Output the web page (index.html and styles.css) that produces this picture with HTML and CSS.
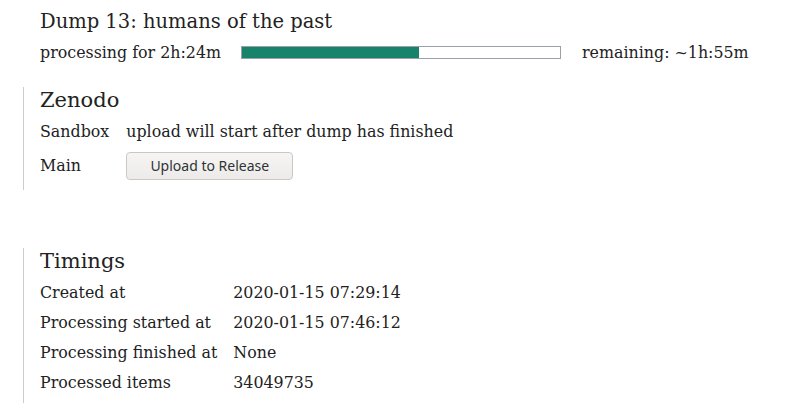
FILE: index.html
```html
<!DOCTYPE html>
<html>
<head>
<meta charset="utf-8">
<link rel="stylesheet" href="styles.css">
</head>
<body>
<div class="page">
  <div class="intro">
    <h1 class="title">Dump 13: humans of the past</h1>
    <div class="progress-row">
      <span>processing for 2h:24m</span>
      <div class="bar"><div class="bar-fill" style="width:55.6%"></div></div>
      <span>remaining: ~1h:55m</span>
    </div>
  </div>

  <section class="section zenodo">
    <h2 class="section-title">Zenodo</h2>
    <div class="table table-zenodo">
      <div class="cell">Sandbox</div>
      <div class="cell">upload will start after dump has finished</div>
      <div class="cell">Main</div>
      <div class="cell"><button class="btn" type="button">Upload to Release</button></div>
    </div>
  </section>

  <section class="section timings">
    <h2 class="section-title">Timings</h2>
    <div class="table">
      <div class="cell">Created at</div>
      <div class="cell">2020-01-15 07:29:14</div>
      <div class="cell">Processing started at</div>
      <div class="cell">2020-01-15 07:46:12</div>
      <div class="cell">Processing finished at</div>
      <div class="cell">None</div>
      <div class="cell">Processed items</div>
      <div class="cell">34049735</div>
    </div>
  </section>
</div>
</body>
</html>
```

FILE: styles.css
```css
html, body {
  margin: 0;
  padding: 0;
  background: #ffffff;
}

body {
  font-family: "DejaVu Serif", serif;
  font-size: 15.85px;
  color: #222222;
}

.page {
  padding: 10px 0 0 23px;
}

.intro {
  padding-left: 17px;
}

.title {
  margin: 0;
  font-size: 19.5px;
  font-weight: normal;
  line-height: 23px;
}

.progress-row {
  display: flex;
  align-items: center;
  height: 20px;
  margin-top: 9px;
}

.bar {
  width: 318px;
  height: 11px;
  border: 1px solid #9aa0a8;
  margin: 0 21px 0 20px;
  background: #ffffff;
  display: flex;
}

.bar-fill {
  height: 100%;
  background: #17836b;
}

.section {
  border-left: 1px solid #cccccc;
  padding: 2px 0 5px 16px;
}

.zenodo {
  margin-top: 25px;
}

.timings {
  margin-top: 58px;
}

.section-title {
  margin: 0;
  font-size: 21px;
  font-weight: normal;
  line-height: 23px;
}

.table {
  display: grid;
  grid-template-columns: max-content 1fr;
  column-gap: 16px;
  margin-top: 5px;
}

.table-zenodo {
  column-gap: 17px;
}

.cell {
  display: flex;
  align-items: center;
  padding: 5px 0;
  min-height: 20px;
  line-height: 20px;
}

.btn {
  font-family: "Noto Sans", sans-serif;
  font-size: 14px;
  color: #2e3436;
  width: 167px;
  height: 28px;
  border: 1px solid #cdc7c2;
  border-radius: 4px;
  background: linear-gradient(#f6f5f4, #edebe9);
  padding: 0;
  line-height: 26px;
}
```
